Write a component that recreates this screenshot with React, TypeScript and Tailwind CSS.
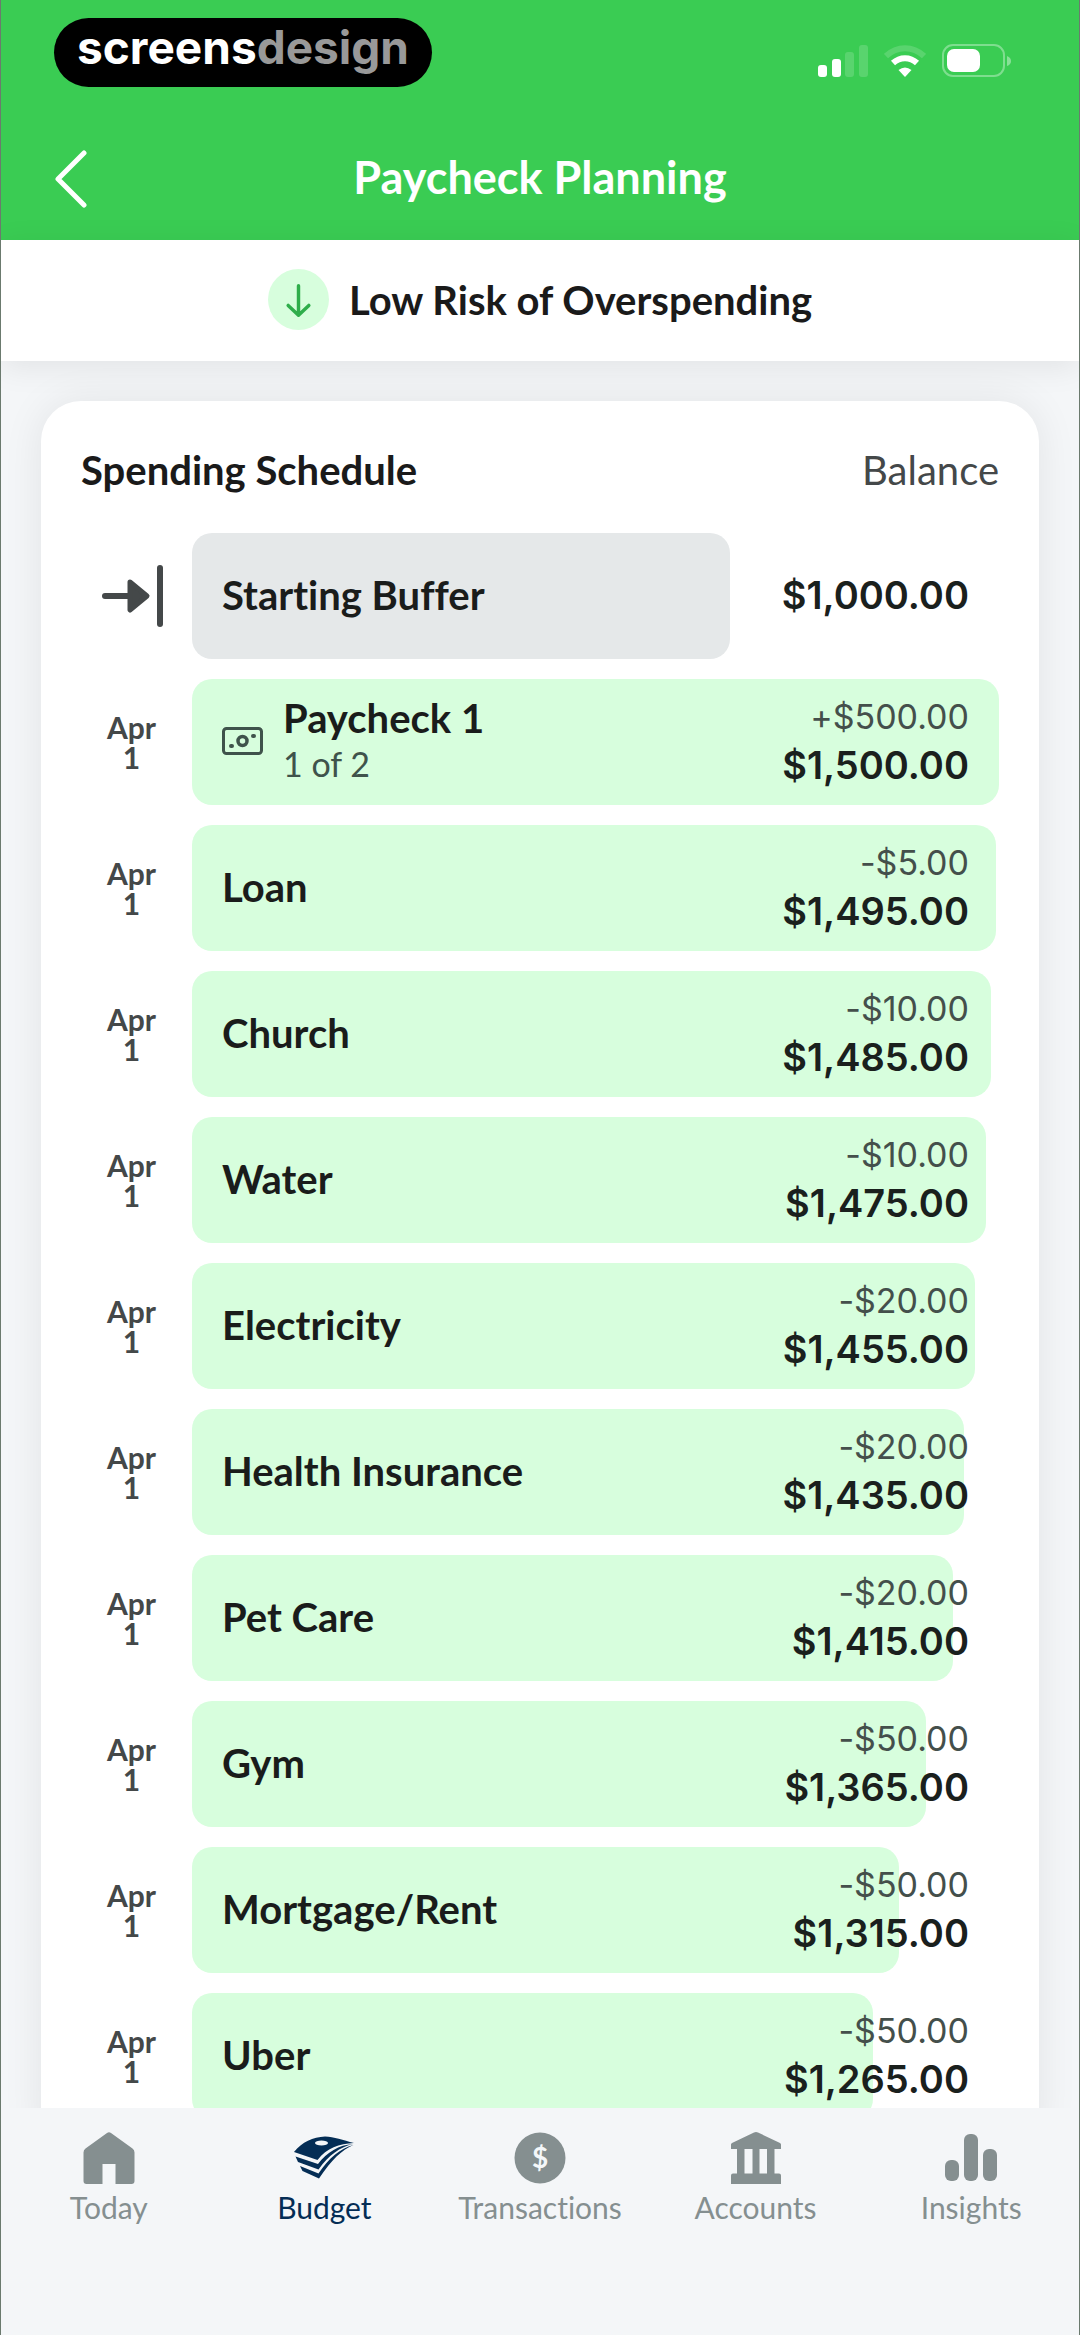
import React from 'react';

interface ScheduleItem {
  name: string;
  note?: string;
  change?: string;
  balance: number;
}

const MAX_BALANCE = 1500;

const ITEMS: ScheduleItem[] = [
  { name: 'Starting Buffer', balance: 1000 },
  { name: 'Paycheck 1', note: '1 of 2', change: '+$500.00', balance: 1500 },
  { name: 'Loan', change: '-$5.00', balance: 1495 },
  { name: 'Church', change: '-$10.00', balance: 1485 },
  { name: 'Water', change: '-$10.00', balance: 1475 },
  { name: 'Electricity', change: '-$20.00', balance: 1455 },
  { name: 'Health Insurance', change: '-$20.00', balance: 1435 },
  { name: 'Pet Care', change: '-$20.00', balance: 1415 },
  { name: 'Gym', change: '-$50.00', balance: 1365 },
  { name: 'Mortgage/Rent', change: '-$50.00', balance: 1315 },
  { name: 'Uber', change: '-$50.00', balance: 1265 },
];

const formatMoney = (value: number) =>
  '$' + value.toLocaleString('en-US', { minimumFractionDigits: 2 });

const StatusIcons: React.FC = () => (
  <div className="flex items-center gap-4">
    <svg className="w-[50px] h-[34px]" viewBox="0 0 50 34" fill="#fff">
      <rect x="0" y="21" width="9" height="12" rx="3" />
      <rect x="14" y="15" width="9" height="18" rx="3" />
      <rect x="27" y="8" width="9" height="25" rx="3" opacity=".16" />
      <rect x="41" y="1" width="9" height="32" rx="3" opacity=".16" />
    </svg>
    <svg className="w-[42px] h-[34px]" viewBox="0 0 42 34" fill="none" stroke="#fff">
      <path d="M2 12 C13 1.500 29 1.500 40 12" strokeWidth="6" opacity=".16" />
      <path d="M9 19 C16 12.500 26 12.500 33 19" strokeWidth="6" />
      <path d="M14.500 26 Q21 21 27.500 26 L21 33 Z" fill="#fff" stroke="none" />
    </svg>
    <svg className="w-[70px] h-[34px]" viewBox="0 0 70 34">
      <rect x="1" y="1" width="61" height="31" rx="10" fill="none" stroke="#fff" strokeWidth="2" opacity=".35" />
      <rect x="5" y="5" width="33" height="23" rx="7" fill="#fff" />
      <path d="M65 12 Q69 13.500 69 17 Q69 20.500 65 22 Z" fill="#fff" opacity=".4" />
    </svg>
  </div>
);

const StartIcon: React.FC = () => (
  <svg className="w-[62px] h-16" viewBox="0 0 62 64" stroke="#444849" strokeLinecap="round" strokeLinejoin="round">
    <path d="M4 32 H28" strokeWidth="6" />
    <path d="M29 18 L46 32 L29 46 Z" fill="#444849" strokeWidth="5" />
    <path d="M59 4 V60" strokeWidth="6" />
  </svg>
);

const CashIcon: React.FC = () => (
  <svg className="w-[41px] h-[28px]" viewBox="0 0 41 28" fill="none" stroke="#3f534b">
    <rect x="1.500" y="1.500" width="38" height="25" rx="3" strokeWidth="3" />
    <circle cx="20.500" cy="14" r="4.500" strokeWidth="3.500" />
    <path d="M9 19 H10 M31 9 H32" strokeWidth="4" strokeLinecap="round" />
  </svg>
);

const HomeIcon: React.FC = () => (
  <svg className="w-[52px] h-[54px]" viewBox="0 0 52 54" fill="currentColor">
    <path d="M24 1 Q26 -.3 28 1 L49.500 16.500 Q51.500 18 51.500 20.500 V49 Q51.500 52 48.500 52 H32.500 V32 H19.500 V52 H3.500 Q.5 52 .5 49 V20.500 Q.5 18 2.500 16.500 Z" />
  </svg>
);

const BudgetIcon: React.FC = () => (
  <svg className="w-[62px] h-[54px]" viewBox="0 0 62 54" fill="currentColor">
    <path
      fillRule="evenodd"
      d="M1 20 C9 10 20 5 32 4.500 C41 5 50 8 61 11 C46 11.500 34 16 24.500 28 Z M22 11 A6.500 2.500 0 1 0 35 11 A6.500 2.500 0 1 0 22 11 Z"
    />
    <path d="M2.500 24.500 L25 32 C34 20 46 13 60 12 C47 15 36 23 25.500 37.500 L5 30 Z" />
    <path d="M7 34 L25.500 41.500 C36 26 47 16.500 60.500 13 C49 18 39 27 26 46.500 L9.500 39 Z" />
  </svg>
);

const TransactionsIcon: React.FC = () => (
  <svg className="w-[54px] h-[54px]" viewBox="0 0 54 54">
    <circle cx="27" cy="26" r="25.500" fill="currentColor" />
    <text x="27" y="36" textAnchor="middle" fill="#f4f7f9" className="font-['Lato'] text-[28px] font-bold">
      $
    </text>
  </svg>
);

const AccountsIcon: React.FC = () => (
  <svg className="w-[52px] h-[54px]" viewBox="0 0 52 54" fill="currentColor">
    <path d="M24 .5 Q26 -.5 28 .5 L50 11 Q51 11.500 51 12.500 V17 H44.500 V41.500 H49 Q51 41.500 51 43.500 V52 H1 V43.500 Q1 41.500 3 41.500 H7 V17 H1 V12.500 Q1 11.500 2 11 Z M14.500 17 V41.500 H22.500 V17 Z M29.500 17 V41.500 H37 V17 Z" />
  </svg>
);

const InsightsIcon: React.FC = () => (
  <svg className="w-[52px] h-[54px]" viewBox="0 0 52 54" fill="currentColor">
    <rect x="0" y="28" width="14" height="21" rx="6" />
    <rect x="19" y="2" width="14" height="47" rx="6" />
    <rect x="38" y="17" width="14" height="32" rx="6" />
  </svg>
);

const TABS = [
  { label: 'Today', Icon: HomeIcon },
  { label: 'Budget', Icon: BudgetIcon, active: true },
  { label: 'Transactions', Icon: TransactionsIcon },
  { label: 'Accounts', Icon: AccountsIcon },
  { label: 'Insights', Icon: InsightsIcon },
];

const ScheduleRow: React.FC<{ item: ScheduleItem }> = ({ item }) => (
  <li className="flex h-[126px] shrink-0 items-center">
    <div className="flex w-[111px] shrink-0 justify-center pr-2.5">
      {item.change ? (
        <time className="w-14 text-center text-[30px] font-bold leading-[30px] text-[#444849]">Apr 1</time>
      ) : (
        <StartIcon />
      )}
    </div>
    <div className="relative flex h-full flex-1 items-center justify-between px-[30px] pb-0.5">
      {/* bar length follows the running balance */}
      <div
        className={`absolute inset-y-0 left-0 rounded-[20px] ${item.change ? 'bg-[#d7fedd]' : 'bg-[#e5e8e9]'}`}
        style={{ width: `${(item.balance / MAX_BALANCE) * 100}%` }}
      />
      <div className="relative flex items-center gap-5">
        {item.note && <CashIcon />}
        <div>
          <p className="text-[40px] font-bold leading-[46px] text-[#1a1c1b]">{item.name}</p>
          {item.note && <p className="text-[34px] leading-[46px] text-[#3f534b]">{item.note}</p>}
        </div>
      </div>
      <div className="relative text-right font-['Inter',sans-serif]">
        {item.change && <p className="text-[34px] leading-[48px] text-[#444f4b]">{item.change}</p>}
        <p className="text-[38px] font-semibold leading-[48px] text-[#1a201d]">{formatMoney(item.balance)}</p>
      </div>
    </div>
  </li>
);

const App: React.FC = () => {
  return (
    <div className="flex h-screen flex-col overflow-hidden border-x border-[#6b7a6e] bg-[#f4f6f8] font-['Lato',sans-serif] [font-variant-ligatures:none]">
      <header className="shrink-0 bg-[#3acc53] text-white">
        <div className="flex h-[118px] items-start justify-between pl-[53px] pr-[67px] pt-[18px]">
          <div className="flex h-[69px] w-[378px] items-start justify-center rounded-[35px] bg-black pt-[2px] font-['Inter',sans-serif] text-[46px] font-bold leading-[54px]">
            <span>screens</span>
            <span className="text-[#999]">design</span>
          </div>
          <div className="pt-[26px]">
            <StatusIcons />
          </div>
        </div>
        <div className="grid h-[122px] grid-cols-[120px_1fr_120px] items-center">
          <button type="button" aria-label="Back" className="pl-[54px]">
            <svg className="w-[32px] h-[58px]" viewBox="0 0 32 58" fill="none" stroke="#fff" strokeWidth="5" strokeLinecap="round" strokeLinejoin="round">
              <path d="M29 3 L3 29 L29 55" />
            </svg>
          </button>
          <h1 className="pb-0.5 text-center text-[45px] font-bold">Paycheck Planning</h1>
        </div>
      </header>

      <section className="z-10 flex h-[121px] shrink-0 items-center justify-center gap-5 bg-white pb-0.5 shadow-[0_6px_30px_rgba(0,0,0,0.08)]">
        <svg className="h-[61px] w-[61px]" viewBox="0 0 62 62" fill="none" strokeLinecap="round" strokeLinejoin="round">
          <circle cx="31" cy="31" r="31" fill="#d7fedd" />
          <path d="M31 17 V46 M20.500 37 L31 47 L41.500 37" stroke="#2fae4b" strokeWidth="3.500" />
        </svg>
        <p className="text-[40px] font-bold leading-[46px] text-[#1a1a1a]">Low Risk of Overspending</p>
      </section>

      <main className="min-h-0 flex-1 overflow-hidden px-10 pt-10">
        <div className="rounded-[40px] bg-white px-10 pt-[42px] shadow-[0_0_40px_rgba(0,0,0,0.08)]">
          <div className="flex h-[56px] items-center justify-between pb-0.5 text-[40px]">
            <h2 className="font-bold text-[#1a1a1a]">Spending Schedule</h2>
            <span className="text-[#444849]">Balance</span>
          </div>
          <ul className="flex flex-col gap-5 pb-10 pt-[34px]">
            {ITEMS.map((item) => (
              <ScheduleRow key={item.name} item={item} />
            ))}
          </ul>
        </div>
      </main>

      <nav className="z-10 grid h-[227px] shrink-0 grid-cols-5 items-start bg-[#f4f6f8] pt-6">
        {TABS.map(({ label, Icon, active }) => (
          <a
            key={label}
            href={`#${label.toLowerCase()}`}
            className={`flex flex-col items-center text-[30px] leading-[42px] ${active ? 'text-[#042d55]' : 'text-[#858f90]'}`}
          >
            <Icon />
            <span>{label}</span>
          </a>
        ))}
      </nav>
    </div>
  );
};

export default App;
